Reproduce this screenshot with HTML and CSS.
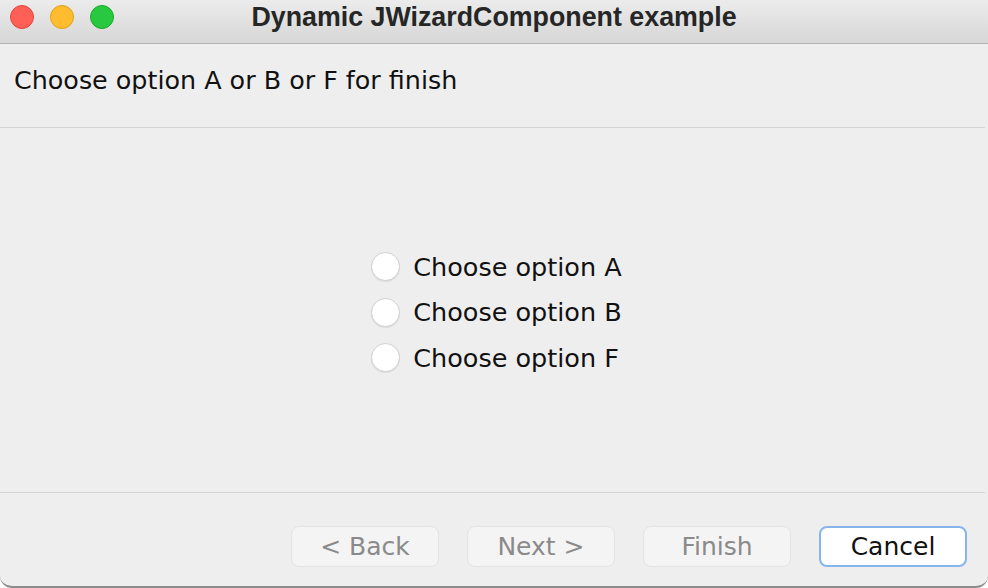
FILE: index.html
```html
<!DOCTYPE html>
<html>
<head>
<meta charset="utf-8">
<link rel="stylesheet" href="styles.css">
</head>
<body>
<div class="window">
  <div class="titlebar">
    <div class="lights">
      <span class="light red"></span>
      <span class="light yellow"></span>
      <span class="light green"></span>
    </div>
    <div class="title">Dynamic JWizardComponent example</div>
  </div>
  <div class="header">Choose option A or B or F for finish</div>
  <div class="content">
    <div class="options">
      <label class="option"><span class="radio"></span><span class="label">Choose option A</span></label>
      <label class="option"><span class="radio"></span><span class="label">Choose option B</span></label>
      <label class="option"><span class="radio"></span><span class="label">Choose option F</span></label>
    </div>
  </div>
  <div class="footer">
    <button class="btn disabled">&lt; Back</button>
    <button class="btn disabled">Next &gt;</button>
    <button class="btn disabled">Finish</button>
    <button class="btn primary">Cancel</button>
  </div>
</div>
</body>
</html>
```
FILE: styles.css
```css
html, body {
  margin: 0;
  padding: 0;
  width: 988px;
  height: 588px;
  overflow: hidden;
  background: #ffffff;
}
.window {
  width: 988px;
  height: 588px;
  box-sizing: border-box;
  background: #eeeeee;
  border-bottom: 2px solid #8c8c8c;
  border-radius: 0 0 12px 12px;
  display: flex;
  flex-direction: column;
  overflow: hidden;
  font-family: "DejaVu Sans", sans-serif;
}
.titlebar {
  height: 43px;
  flex: none;
  position: relative;
  background: linear-gradient(#ececec, #d6d6d6);
  border-bottom: 1px solid #b4b4b4;
  display: flex;
  align-items: center;
  justify-content: center;
}
.lights {
  position: absolute;
  left: 10px;
  top: 5px;
  display: flex;
  gap: 16px;
}
.light {
  width: 24px;
  height: 24px;
  border-radius: 50%;
  box-sizing: border-box;
}
.red { background: #fe5f57; border: 1px solid #e2463f; }
.yellow { background: #febc2e; border: 1px solid #e1a116; }
.green { background: #28c840; border: 1px solid #1aab29; }
.title {
  font-family: "Liberation Sans", Arial, sans-serif;
  font-weight: bold;
  font-size: 26.8px;
  color: #262626;
  margin-top: -9px;
}
.header {
  height: 84px;
  flex: none;
  box-sizing: border-box;
  padding: 21px 0 0 14px;
  font-size: 25.4px;
  color: #111111;
  border-bottom: 1px solid #d3d3d3;
  margin-right: 3px;
}
.content {
  flex: 1;
  display: flex;
  align-items: center;
  justify-content: center;
  border-bottom: 1px solid #d3d3d3;
  margin-right: 3px;
  padding: 4px 0 0 8px;
}
.options {
  display: flex;
  flex-direction: column;
  gap: 17.5px;
}
.option {
  display: flex;
  align-items: center;
  gap: 13px;
  height: 28px;
}
.radio {
  width: 29px;
  height: 29px;
  box-sizing: border-box;
  border-radius: 50%;
  background: #ffffff;
  border: 1px solid #d0d0d0;
  box-shadow: 0 1px 1px rgba(0,0,0,0.08);
}
.label {
  font-size: 25.5px;
  color: #111111;
}
.footer {
  height: 93px;
  flex: none;
  box-sizing: border-box;
  display: flex;
  justify-content: flex-end;
  align-items: flex-start;
  padding: 33px 21px 0 0;
  gap: 28px;
}
.btn {
  width: 148px;
  height: 41px;
  box-sizing: border-box;
  border-radius: 8px;
  font-family: "DejaVu Sans", sans-serif;
  font-size: 25px;
  padding: 0;
}
.btn.disabled {
  background: #f4f4f4;
  border: 1px solid #e3e3e3;
  color: #8a8a8a;
}
.btn.primary {
  background: #ffffff;
  border: 2px solid #86b5ee;
  color: #111111;
}
```
